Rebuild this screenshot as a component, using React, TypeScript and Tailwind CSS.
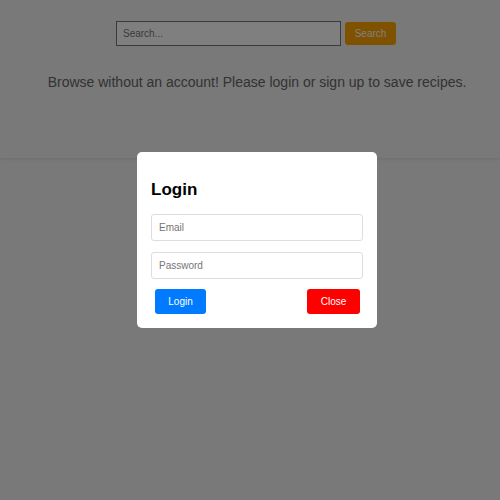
const field =
  "block h-[27px] w-full rounded-[3px] border border-[#dddddd] bg-white px-[7px] text-[10px] text-black outline-none placeholder:text-[#757575]";

export default function App() {
  return (
    <div className="relative min-h-screen bg-[#f2f2f2] font-['Liberation_Sans',Arial,sans-serif] text-[#666666]">
      <header className="flex flex-col items-center pt-[21px] pb-[66px] shadow-[0_1px_3px_rgba(0,0,0,0.1)]">
        <form className="ml-3 flex w-[280px] items-center gap-1" onSubmit={(e) => e.preventDefault()}>
          <input
            type="search"
            aria-label="Search"
            placeholder="Search..."
            className="h-[25px] min-w-0 flex-1 border border-[#767676] bg-white px-1.5 text-[10px] outline-none placeholder:text-[#757575]"
          />
          <button type="submit" className="h-[23px] w-[51px] rounded-[3px] bg-[#ffa500] text-[10px] text-white">
            Search
          </button>
        </form>
        <p className="mt-[26px] pl-[14px] text-center text-[14px] leading-5">
          Browse without an account! Please login or sign up to save recipes.
        </p>
      </header>

      <div className="fixed inset-0 flex items-center justify-center bg-black/50 pb-5 pl-[14px]">
        <section
          role="dialog"
          aria-modal="true"
          aria-labelledby="login-title"
          className="w-60 rounded-[5px] bg-white p-[14px]"
        >
          <h2 id="login-title" className="mt-3 text-[17px] leading-6 font-bold text-black">
            Login
          </h2>
          <form className="mt-3" onSubmit={(e) => e.preventDefault()}>
            <div className="flex flex-col gap-[11px]">
              <input type="email" aria-label="Email" placeholder="Email" className={field} />
              <input type="password" aria-label="Password" placeholder="Password" className={field} />
            </div>
            <div className="mt-2.5 flex justify-between pr-[3px] pl-1">
              <button type="submit" className="h-[25px] w-[51px] rounded-[3px] bg-[#007bff] text-[10px] text-white">
                Login
              </button>
              <button type="button" className="h-[25px] w-[53px] rounded-[3px] bg-[#ff0000] text-[10px] text-white">
                Close
              </button>
            </div>
          </form>
        </section>
      </div>
    </div>
  );
}
